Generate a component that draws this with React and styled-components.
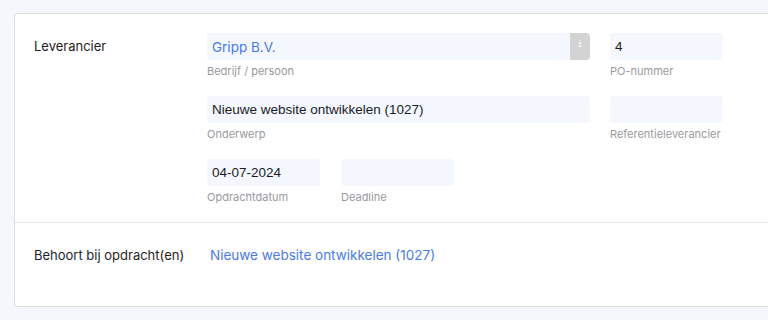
import React from "react";
import styled, { createGlobalStyle } from "styled-components";

const GlobalStyle = createGlobalStyle`
  html, body {
    margin: 0;
    padding: 0;
    background: #f5f7fd;
    overflow: hidden;
  }
  body {
    font-family: Inter, "Liberation Sans", sans-serif;
  }
`;

const Page = styled.div`
  padding: 13px 0 0 14px;
  height: 320px;
  box-sizing: border-box;
  overflow: hidden;
`;

const Card = styled.div`
  width: 800px;
  background: #fff;
  border: 1px solid #dcdde1;
  border-radius: 4px;
`;

const Section = styled.div`
  display: grid;
  grid-template-columns: 173px 1fr;
  padding: 19px 19px ${(p) => p.$bottom}px;
  & + & {
    border-top: 1px solid #e4e5e8;
  }
`;

const Label = styled.div`
  height: 27px;
  line-height: 27px;
  font-size: 13px;
  color: #1e1e24;
`;

const Fields = styled.div`
  display: flex;
  flex-direction: column;
  gap: 17px;
`;

const FieldRow = styled.div`
  display: flex;
  gap: ${(p) => p.$gap || 20}px;
`;

const Field = styled.div`
  width: ${(p) => p.$width}px;
  display: flex;
  flex-direction: column;
`;

const Input = styled.div`
  height: 27px;
  display: flex;
  align-items: center;
  background: #f4f7fe;
  border-radius: 4px;
  font-family: "Liberation Sans", Arial, sans-serif;
  font-size: 13.5px;
  color: ${(p) => (p.$link ? "#4a7be3" : "#1b1b1f")};
  overflow: hidden;
`;

const Value = styled.span`
  flex: 1;
  padding-left: 5px;
  font-family: ${(p) => (p.$inter ? "Inter, sans-serif" : "inherit")};
`;

const InfoButton = styled.span`
  width: 20px;
  height: 100%;
  background: #d3d3d3;
  color: #fff;
  font-family: "DejaVu Sans Mono", monospace;
  font-size: 9px;
  display: flex;
  justify-content: center;
  padding-top: 6px;
  box-sizing: border-box;
`;

const Caption = styled.div`
  margin-top: 4px;
  font-size: 11px;
  line-height: 15px;
  color: #9a9a9e;
`;

const Link = styled.a`
  height: 27px;
  line-height: 27px;
  padding-left: 3px;
  font-size: 13.5px;
  color: #4a7be3;
  text-decoration: none;
`;

export default function App() {
  return (
    <>
      <GlobalStyle />
      <Page>
        <Card>
          <Section $bottom={17}>
            <Label>Leverancier</Label>
            <Fields>
              <FieldRow>
                <Field $width={383}>
                  <Input $link>
                    <Value $inter>Gripp B.V.</Value>
                    <InfoButton>i</InfoButton>
                  </Input>
                  <Caption>Bedrijf / persoon</Caption>
                </Field>
                <Field $width={113}>
                  <Input>
                    <Value>4</Value>
                  </Input>
                  <Caption>PO-nummer</Caption>
                </Field>
              </FieldRow>
              <FieldRow>
                <Field $width={383}>
                  <Input>
                    <Value>Nieuwe website ontwikkelen (1027)</Value>
                  </Input>
                  <Caption>Onderwerp</Caption>
                </Field>
                <Field $width={113}>
                  <Input />
                  <Caption>Referentieleverancier</Caption>
                </Field>
              </FieldRow>
              <FieldRow $gap={21}>
                <Field $width={113}>
                  <Input>
                    <Value>04-07-2024</Value>
                  </Input>
                  <Caption>Opdrachtdatum</Caption>
                </Field>
                <Field $width={113}>
                  <Input />
                  <Caption>Deadline</Caption>
                </Field>
              </FieldRow>
            </Fields>
          </Section>
          <Section $bottom={37}>
            <Label>Behoort bij opdracht(en)</Label>
            <Link href="#">Nieuwe website ontwikkelen (1027)</Link>
          </Section>
        </Card>
      </Page>
    </>
  );
}
